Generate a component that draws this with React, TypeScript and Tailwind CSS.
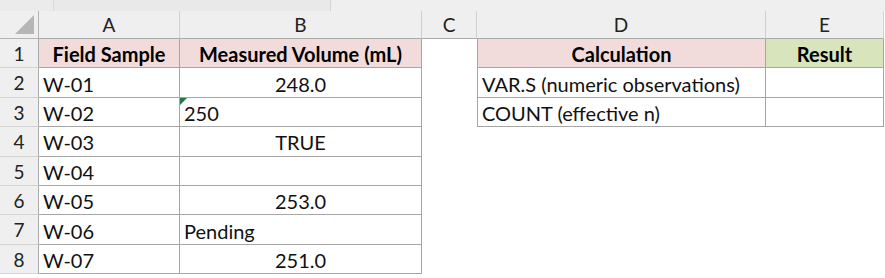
import React from 'react';

const cols = ['A', 'B', 'C', 'D', 'E'];

type Cell = { text?: string; align?: 'left' | 'center'; fill?: 'pink' | 'green'; bold?: boolean; boxed?: boolean; flag?: boolean };

const rows: Cell[][] = [
  [
    { text: 'Field Sample', align: 'center', fill: 'pink', bold: true, boxed: true },
    { text: 'Measured Volume (mL)', align: 'center', fill: 'pink', bold: true, boxed: true },
    {},
    { text: 'Calculation', align: 'center', fill: 'pink', bold: true, boxed: true },
    { text: 'Result', align: 'center', fill: 'green', bold: true, boxed: true },
  ],
  [
    { text: 'W-01', boxed: true },
    { text: '248.0', align: 'center', boxed: true },
    {},
    { text: 'VAR.S (numeric observations)', boxed: true },
    { boxed: true },
  ],
  [
    { text: 'W-02', boxed: true },
    { text: '250', boxed: true, flag: true },
    {},
    { text: 'COUNT (effective n)', boxed: true },
    { boxed: true },
  ],
  [{ text: 'W-03', boxed: true }, { text: 'TRUE', align: 'center', boxed: true }, {}, {}, {}],
  [{ text: 'W-04', boxed: true }, { boxed: true }, {}, {}, {}],
  [{ text: 'W-05', boxed: true }, { text: '253.0', align: 'center', boxed: true }, {}, {}, {}],
  [{ text: 'W-06', boxed: true }, { text: 'Pending', boxed: true }, {}, {}, {}],
  [{ text: 'W-07', boxed: true }, { text: '251.0', align: 'center', boxed: true }, {}, {}, {}],
];

function DataCell({ cell, col }: { cell: Cell; col: number }) {
  const bg = cell.fill === 'pink' ? 'bg-[#f2dcdb]' : cell.fill === 'green' ? 'bg-[#d8e4bc]' : 'bg-white';
  const border = cell.boxed ? 'border-r border-b border-[#a6a6a6]' : '';
  const leftEdge = cell.boxed && col === 3 ? 'border-l border-[#a6a6a6]' : '';
  return (
    <div
      className={`relative flex items-center pt-[2px] h-[29.4px] text-[20px] leading-none text-[#111] ${bg} ${border} ${leftEdge} ${
        cell.align === 'center' ? 'justify-center' : 'justify-start pl-[4px]'
      } ${cell.bold ? 'font-bold text-black' : ''}`}
    >
      {cell.flag && (
        <span className="absolute left-0 top-0 w-0 h-0 border-t-[7px] border-r-[7px] border-t-[#1e7a45] border-r-transparent" />
      )}
      <span className="whitespace-nowrap">{cell.text}</span>
    </div>
  );
}

export default function App() {
  return (
    <div className="w-[885px] h-[278px] bg-white overflow-hidden" style={{ fontFamily: 'Lato, "Open Sans", sans-serif' }}>
      <div className="flex h-[11px] bg-[#e6e6e6]">
        <div className="w-[53px] bg-[#ebebeb]" />
        <div className="w-[277px] border-l border-[#d9d9d9] bg-[#e9e9e9]" />
        <div className="flex-1 border-l border-[#d4d4d4] bg-[#efefef]" />
      </div>
      <div className="grid grid-cols-[39px_141px_242px_55px_289px_118px]">
        <div className="relative h-[28px] bg-[#efefef] border-r border-b border-[#b4b4b4]">
          <span className="absolute right-[4px] bottom-[4px] w-0 h-0 border-b-[19px] border-l-[19px] border-b-[#b6b6b6] border-l-transparent" />
        </div>
        {cols.map((c) => (
          <div
            key={c}
            className="flex items-center justify-center pt-[2px] h-[28px] bg-[#efefef] border-r border-b border-r-[#d0d0d0] border-b-[#ababab] text-[19px] text-[#222]"
          >
            {c}
          </div>
        ))}
        {rows.map((r, i) => (
          <React.Fragment key={i}>
            <div className="flex items-center justify-center pt-[2px] h-[29.4px] bg-[#efefef] border-r border-b border-r-[#ababab] border-b-[#d4d4d4] text-[19px] text-[#222]">
              {i + 1}
            </div>
            {r.map((cell, j) => (
              <DataCell key={j} cell={cell} col={j} />
            ))}
          </React.Fragment>
        ))}
      </div>
    </div>
  );
}
